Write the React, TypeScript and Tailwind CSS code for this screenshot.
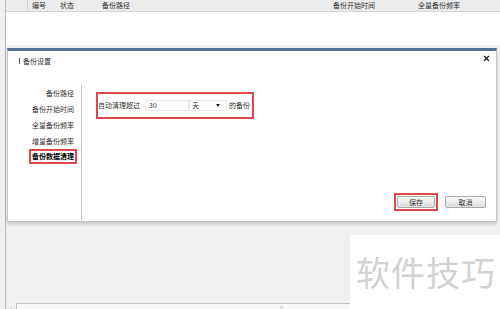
export default function App() {
  const navItems = ['备份路径', '备份开始时间', '全量备份频率', '增量备份频率']

  return (
    <div className="relative flex h-[309px] w-[500px] overflow-hidden bg-[#f0f0f0] font-['Noto_Sans_CJK_SC',sans-serif] text-[7px] text-[#333]">
      {/* left strip */}
      <div className="w-[6px] shrink-0 border-r border-[#b8b8b8]" />

      <div className="flex flex-1 flex-col">
        {/* table header */}
        <div className="flex h-[12px] items-center border-b border-[#d4d4d4] bg-[#ececec] leading-none">
          <div className="h-full w-[22px] border-r border-[#d0d0d0]" />
          <div className="ml-[4px] w-[28px]">编号</div>
          <div className="w-[42px]">状态</div>
          <div className="w-[231px]">备份路径</div>
          <div className="w-[85px]">备份开始时间</div>
          <div>全量备份频率</div>
        </div>
        <div className="h-[33px] bg-white" />
        <div className="h-[3px]" />

        {/* dialog */}
        <div className="ml-[1px] flex h-[174px] w-[490px] flex-col border-x border-b border-t-[3px] border-[#c6c6c6] border-t-[#55708f] bg-white shadow-[0_2px_3px_rgba(0,0,0,0.18)]">
          <div className="flex h-[20px] items-center justify-between pl-[11px] pr-[6px]">
            <div className="flex items-center gap-[3px]">
              <span className="h-[6px] w-px bg-[#555]" />
              <span>备份设置</span>
            </div>
            <svg width="7" height="7" viewBox="0 0 7 7" className="-mt-[6px]">
              <path d="M1 1 L6 6 M6 1 L1 6" stroke="#222" strokeWidth="1.4" />
            </svg>
          </div>

          <div className="mt-[14px] flex flex-1">
            <div className="flex w-[74px] flex-col items-end border-r border-[#c8c8c8] pr-[7px] leading-[16px]">
              {navItems.map((t) => (
                <div key={t}>{t}</div>
              ))}
              <div className="-mr-[3px] border-2 border-[#e0474c] px-[1px] font-bold leading-[11px] text-black">
                备份数据清理
              </div>
            </div>

            <div className="flex flex-1 flex-col justify-between pb-[10px] pl-[14px] pr-[10px] pt-[7px]">
              <div className="flex h-[27px] w-[158px] items-center border-2 border-[#e0474c] leading-none">
                <span>自动清理超过</span>
                <div className="ml-[5px] flex h-[11px] w-[44px] items-center border border-[#e6e6e6] pl-[3px]">30</div>
                <div className="flex h-[11px] w-[38px] items-center justify-between border border-[#e6e6e6] pl-[2px] pr-[6px]">
                  <span>天</span>
                  <svg width="4" height="3" viewBox="0 0 4 3">
                    <path d="M0 0 H4 L2 3 Z" fill="#222" />
                  </svg>
                </div>
                <span className="ml-[2px]">的备份</span>
              </div>

              <div className="flex items-center justify-end gap-[7px]">
                <div className="border-2 border-[#e0474c] p-[1px]">
                  <div className="flex h-[12px] w-[38px] items-center justify-center rounded-[2px] border border-[#a9a9a9] bg-gradient-to-b from-[#fcfcfc] to-[#dedede] leading-none">
                    保存
                  </div>
                </div>
                <div className="flex h-[12px] w-[41px] items-center justify-center rounded-[2px] border border-[#a9a9a9] bg-gradient-to-b from-[#fcfcfc] to-[#dedede] leading-none">
                  取消
                </div>
              </div>
            </div>
          </div>
        </div>

        {/* bottom area with scrollbar */}
        <div className="flex flex-1 flex-col justify-end">
          <div className="flex h-[6px] items-center">
            <span className="w-[10px] text-center text-[5px] leading-none text-[#666]">‹</span>
            <div className="relative h-full flex-1 border-l border-t border-[#c4c4c4] bg-[#f8f8f8]">
              <span className="absolute left-[263px] top-[1px] text-[4px] leading-none text-[#888]">|||</span>
            </div>
          </div>
        </div>
      </div>

      {/* watermark */}
      <div className="absolute bottom-0 right-0 flex h-[74px] w-[150px] items-center justify-center bg-white pl-[2px] text-[34px] leading-none tracking-[1px] text-[#d2d2d2]">
        软件技巧
      </div>
    </div>
  )
}
